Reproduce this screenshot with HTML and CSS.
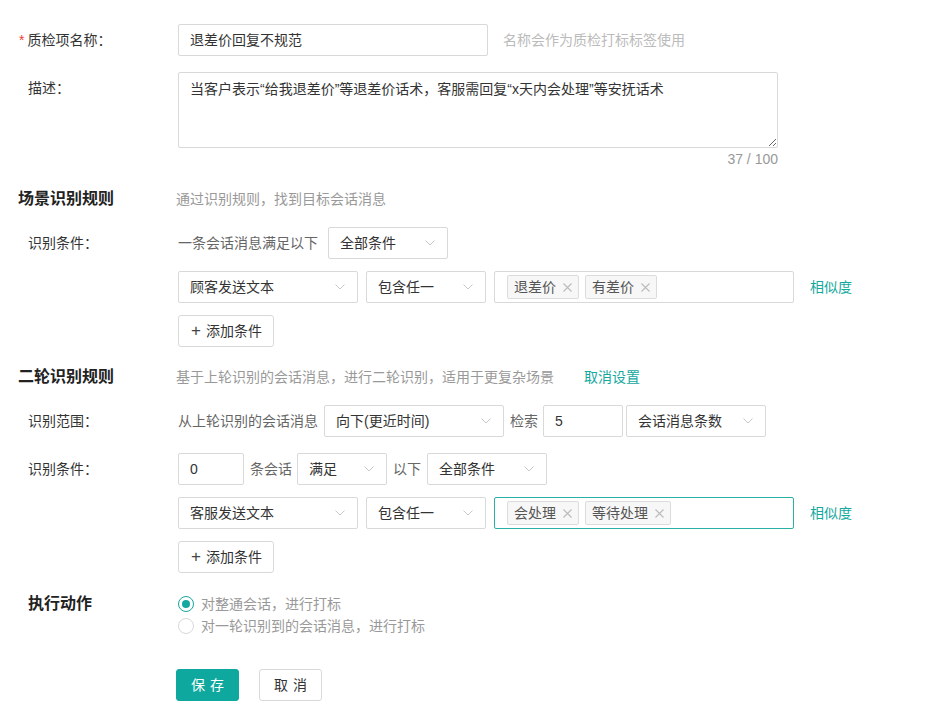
FILE: index.html
```html
<!DOCTYPE html>
<html lang="zh-CN">
<head>
<meta charset="utf-8">
<title>质检项</title>
<link rel="stylesheet" href="styles.css">
</head>
<body>
<div class="page">
  <div class="row">
    <div class="label"><span class="req">*</span>质检项名称：</div>
    <div class="field w310">退差价回复不规范</div>
    <span class="hint">名称会作为质检打标标签使用</span>
  </div>

  <div class="row row-top mt16">
    <div class="label label-desc">描述：</div>
    <div class="desc">
      <textarea class="textarea">当客户表示“给我退差价”等退差价话术，客服需回复“x天内会处理”等安抚话术</textarea>
      <div class="counter">37 / 100</div>
    </div>
  </div>

  <div class="section mt18">
    <div class="section-title">场景识别规则</div>
    <div class="section-sub">通过识别规则，找到目标会话消息</div>
  </div>

  <div class="row mt16">
    <div class="label">识别条件：</div>
    <span class="text gap10">一条会话消息满足以下</span>
    <div class="field select w120">全部条件<svg class="arrow" width="10" height="6" viewBox="0 0 10 6"><path d="M0.5 0.5 L5 5 L9.5 0.5" fill="none" stroke="#c8c8c8" stroke-width="1"/></svg></div>
  </div>

  <div class="row mt12 indent">
    <div class="field select w180">顾客发送文本<svg class="arrow" width="10" height="6" viewBox="0 0 10 6"><path d="M0.5 0.5 L5 5 L9.5 0.5" fill="none" stroke="#c8c8c8" stroke-width="1"/></svg></div>
    <div class="field select w120 ml8">包含任一<svg class="arrow" width="10" height="6" viewBox="0 0 10 6"><path d="M0.5 0.5 L5 5 L9.5 0.5" fill="none" stroke="#c8c8c8" stroke-width="1"/></svg></div>
    <div class="field tags w300 ml8">
      <span class="tag">退差价<svg class="close" width="9" height="9" viewBox="0 0 9 9"><path d="M0.5 0.5 L8.5 8.5 M8.5 0.5 L0.5 8.5" stroke="#bbb" stroke-width="1.1"/></svg></span>
      <span class="tag">有差价<svg class="close" width="9" height="9" viewBox="0 0 9 9"><path d="M0.5 0.5 L8.5 8.5 M8.5 0.5 L0.5 8.5" stroke="#bbb" stroke-width="1.1"/></svg></span>
    </div>
    <a class="link ml16">相似度</a>
  </div>

  <div class="row mt12 indent">
    <button class="btn-add"><span class="plus">+</span>添加条件</button>
  </div>

  <div class="section mt18">
    <div class="section-title">二轮识别规则</div>
    <div class="section-sub">基于上轮识别的会话消息，进行二轮识别，适用于更复杂场景</div>
    <a class="link ml30">取消设置</a>
  </div>

  <div class="row mt16">
    <div class="label">识别范围：</div>
    <span class="text gap6">从上轮识别的会话消息</span>
    <div class="field select w180">向下(更近时间)<svg class="arrow" width="10" height="6" viewBox="0 0 10 6"><path d="M0.5 0.5 L5 5 L9.5 0.5" fill="none" stroke="#c8c8c8" stroke-width="1"/></svg></div>
    <span class="text ml6 gap5">检索</span>
    <div class="field w80">5</div>
    <div class="field select w140 ml3">会话消息条数<svg class="arrow" width="10" height="6" viewBox="0 0 10 6"><path d="M0.5 0.5 L5 5 L9.5 0.5" fill="none" stroke="#c8c8c8" stroke-width="1"/></svg></div>
  </div>

  <div class="row mt16">
    <div class="label">识别条件：</div>
    <div class="field w66">0</div>
    <span class="text ml6 gap5">条会话</span>
    <div class="field select w90">满足<svg class="arrow" width="10" height="6" viewBox="0 0 10 6"><path d="M0.5 0.5 L5 5 L9.5 0.5" fill="none" stroke="#c8c8c8" stroke-width="1"/></svg></div>
    <span class="text ml6 gap6">以下</span>
    <div class="field select w120">全部条件<svg class="arrow" width="10" height="6" viewBox="0 0 10 6"><path d="M0.5 0.5 L5 5 L9.5 0.5" fill="none" stroke="#c8c8c8" stroke-width="1"/></svg></div>
  </div>

  <div class="row mt12 indent">
    <div class="field select w180">客服发送文本<svg class="arrow" width="10" height="6" viewBox="0 0 10 6"><path d="M0.5 0.5 L5 5 L9.5 0.5" fill="none" stroke="#c8c8c8" stroke-width="1"/></svg></div>
    <div class="field select w120 ml8">包含任一<svg class="arrow" width="10" height="6" viewBox="0 0 10 6"><path d="M0.5 0.5 L5 5 L9.5 0.5" fill="none" stroke="#c8c8c8" stroke-width="1"/></svg></div>
    <div class="field tags w300 ml8 focused">
      <span class="tag">会处理<svg class="close" width="9" height="9" viewBox="0 0 9 9"><path d="M0.5 0.5 L8.5 8.5 M8.5 0.5 L0.5 8.5" stroke="#bbb" stroke-width="1.1"/></svg></span>
      <span class="tag">等待处理<svg class="close" width="9" height="9" viewBox="0 0 9 9"><path d="M0.5 0.5 L8.5 8.5 M8.5 0.5 L0.5 8.5" stroke="#bbb" stroke-width="1.1"/></svg></span>
    </div>
    <a class="link ml16">相似度</a>
  </div>

  <div class="row mt12 indent">
    <button class="btn-add"><span class="plus">+</span>添加条件</button>
  </div>

  <div class="row row-top mt20">
    <div class="label action-title">执行动作</div>
    <div class="radios">
      <div class="radio-item"><span class="radio checked"></span>对整通会话，进行打标</div>
      <div class="radio-item"><span class="radio"></span>对一轮识别到的会话消息，进行打标</div>
    </div>
  </div>

  <div class="row mt32 actions">
    <button class="btn-primary">保存</button>
    <button class="btn-default">取消</button>
  </div>
</div>
</body>
</html>
```

FILE: styles.css
```css
* { box-sizing: border-box; }

body {
  margin: 0;
  background: #fff;
  color: #333;
  font-family: "Liberation Sans", "Noto Sans CJK SC", sans-serif;
  font-size: 14px;
  line-height: 20px;
}

.page {
  padding: 24px 0 40px 18px;
}

.row {
  display: flex;
  align-items: center;
}

.row-top {
  align-items: flex-start;
}

.indent {
  padding-left: 160px;
}

.mt12 { margin-top: 12px; }
.mt16 { margin-top: 16px; }
.mt18 { margin-top: 18px; }
.mt20 { margin-top: 20px; }
.mt32 { margin-top: 32px; }
.ml3 { margin-left: 3px; }
.ml6 { margin-left: 6px; }
.ml8 { margin-left: 8px; }
.ml16 { margin-left: 16px; }
.ml30 { margin-left: 30px; }
.gap5 { margin-right: 5px; }
.gap6 { margin-right: 6px; }
.gap10 { margin-right: 10px; }

.label {
  flex: none;
  width: 160px;
  padding-left: 10px;
  color: #333;
}

.req {
  color: #f04134;
  margin-left: -9px;
  margin-right: 3px;
}

.label-desc {
  padding-top: 6px;
}

.text {
  color: #666;
  white-space: nowrap;
}

.field {
  flex: none;
  height: 32px;
  border: 1px solid #d9d9d9;
  border-radius: 2px;
  padding: 0 11px;
  display: flex;
  align-items: center;
  color: #333;
  background: #fff;
  white-space: nowrap;
}

.w66 { width: 66px; }
.w80 { width: 80px; }
.w90 { width: 90px; }
.w120 { width: 120px; }
.w140 { width: 140px; }
.w180 { width: 180px; }
.w300 { width: 300px; }
.w310 { width: 310px; }

.select .arrow {
  margin-left: auto;
  margin-right: 1px;
}

.hint {
  margin-left: 15px;
  color: #bbb;
}

.desc {
  width: 600px;
}

.textarea {
  display: block;
  width: 600px;
  height: 76px;
  border: 1px solid #d9d9d9;
  border-radius: 2px;
  padding: 5px 11px;
  font: inherit;
  color: #333;
  line-height: 22px;
  resize: both;
  outline: none;
}

.counter {
  margin-top: 1px;
  text-align: right;
  color: #999;
  font-size: 14px;
}

.section {
  display: flex;
  align-items: center;
  line-height: 24px;
}

.section-title {
  width: 158px;
  flex: none;
  font-size: 16px;
  font-weight: bold;
  color: #222;
}

.section-sub {
  color: #999;
}

.link {
  color: #14a89e;
  cursor: pointer;
  white-space: nowrap;
}

.tags {
  padding: 0 0 0 12px;
  gap: 6px;
}

.tags.focused {
  border-color: #2ab0a5;
}

.tag {
  display: inline-flex;
  align-items: center;
  height: 24px;
  padding: 0 6px 0 6px;
  border: 1px solid #dcdcdc;
  border-radius: 2px;
  background: #f7f7f7;
  color: #555;
}

.close {
  margin-left: 7px;
}

.btn-add {
  height: 32px;
  width: 96px;
  border: 1px solid #d9d9d9;
  border-radius: 3px;
  background: #fff;
  color: #333;
  font: inherit;
  padding: 0 0 0 12px;
  display: flex;
  align-items: center;
}

.plus {
  font-size: 17px;
  margin-right: 5px;
  color: #444;
}

.action-title {
  font-size: 16px;
  font-weight: bold;
  color: #222;
  line-height: 22px;
}

.radios {
  display: flex;
  flex-direction: column;
}

.radio-item {
  display: flex;
  align-items: center;
  height: 22px;
  color: #999;
}

.radio {
  width: 16px;
  height: 16px;
  border: 1px solid #d9d9d9;
  border-radius: 50%;
  margin-right: 7px;
  position: relative;
  flex: none;
}

.radio.checked {
  border-color: #14a89e;
}

.radio.checked::after {
  content: "";
  position: absolute;
  left: 3px;
  top: 3px;
  width: 8px;
  height: 8px;
  border-radius: 50%;
  background: #14a89e;
}

.actions {
  padding-left: 158px;
}

.btn-primary,
.btn-default {
  height: 32px;
  width: 63px;
  border-radius: 3px;
  font: inherit;
  letter-spacing: 5px;
  text-indent: 5px;
  padding: 0;
}

.btn-primary {
  background: #0fa89e;
  border: 1px solid #0fa89e;
  color: #fff;
}

.btn-default {
  margin-left: 20px;
  background: #fff;
  border: 1px solid #d9d9d9;
  color: #333;
}
```
